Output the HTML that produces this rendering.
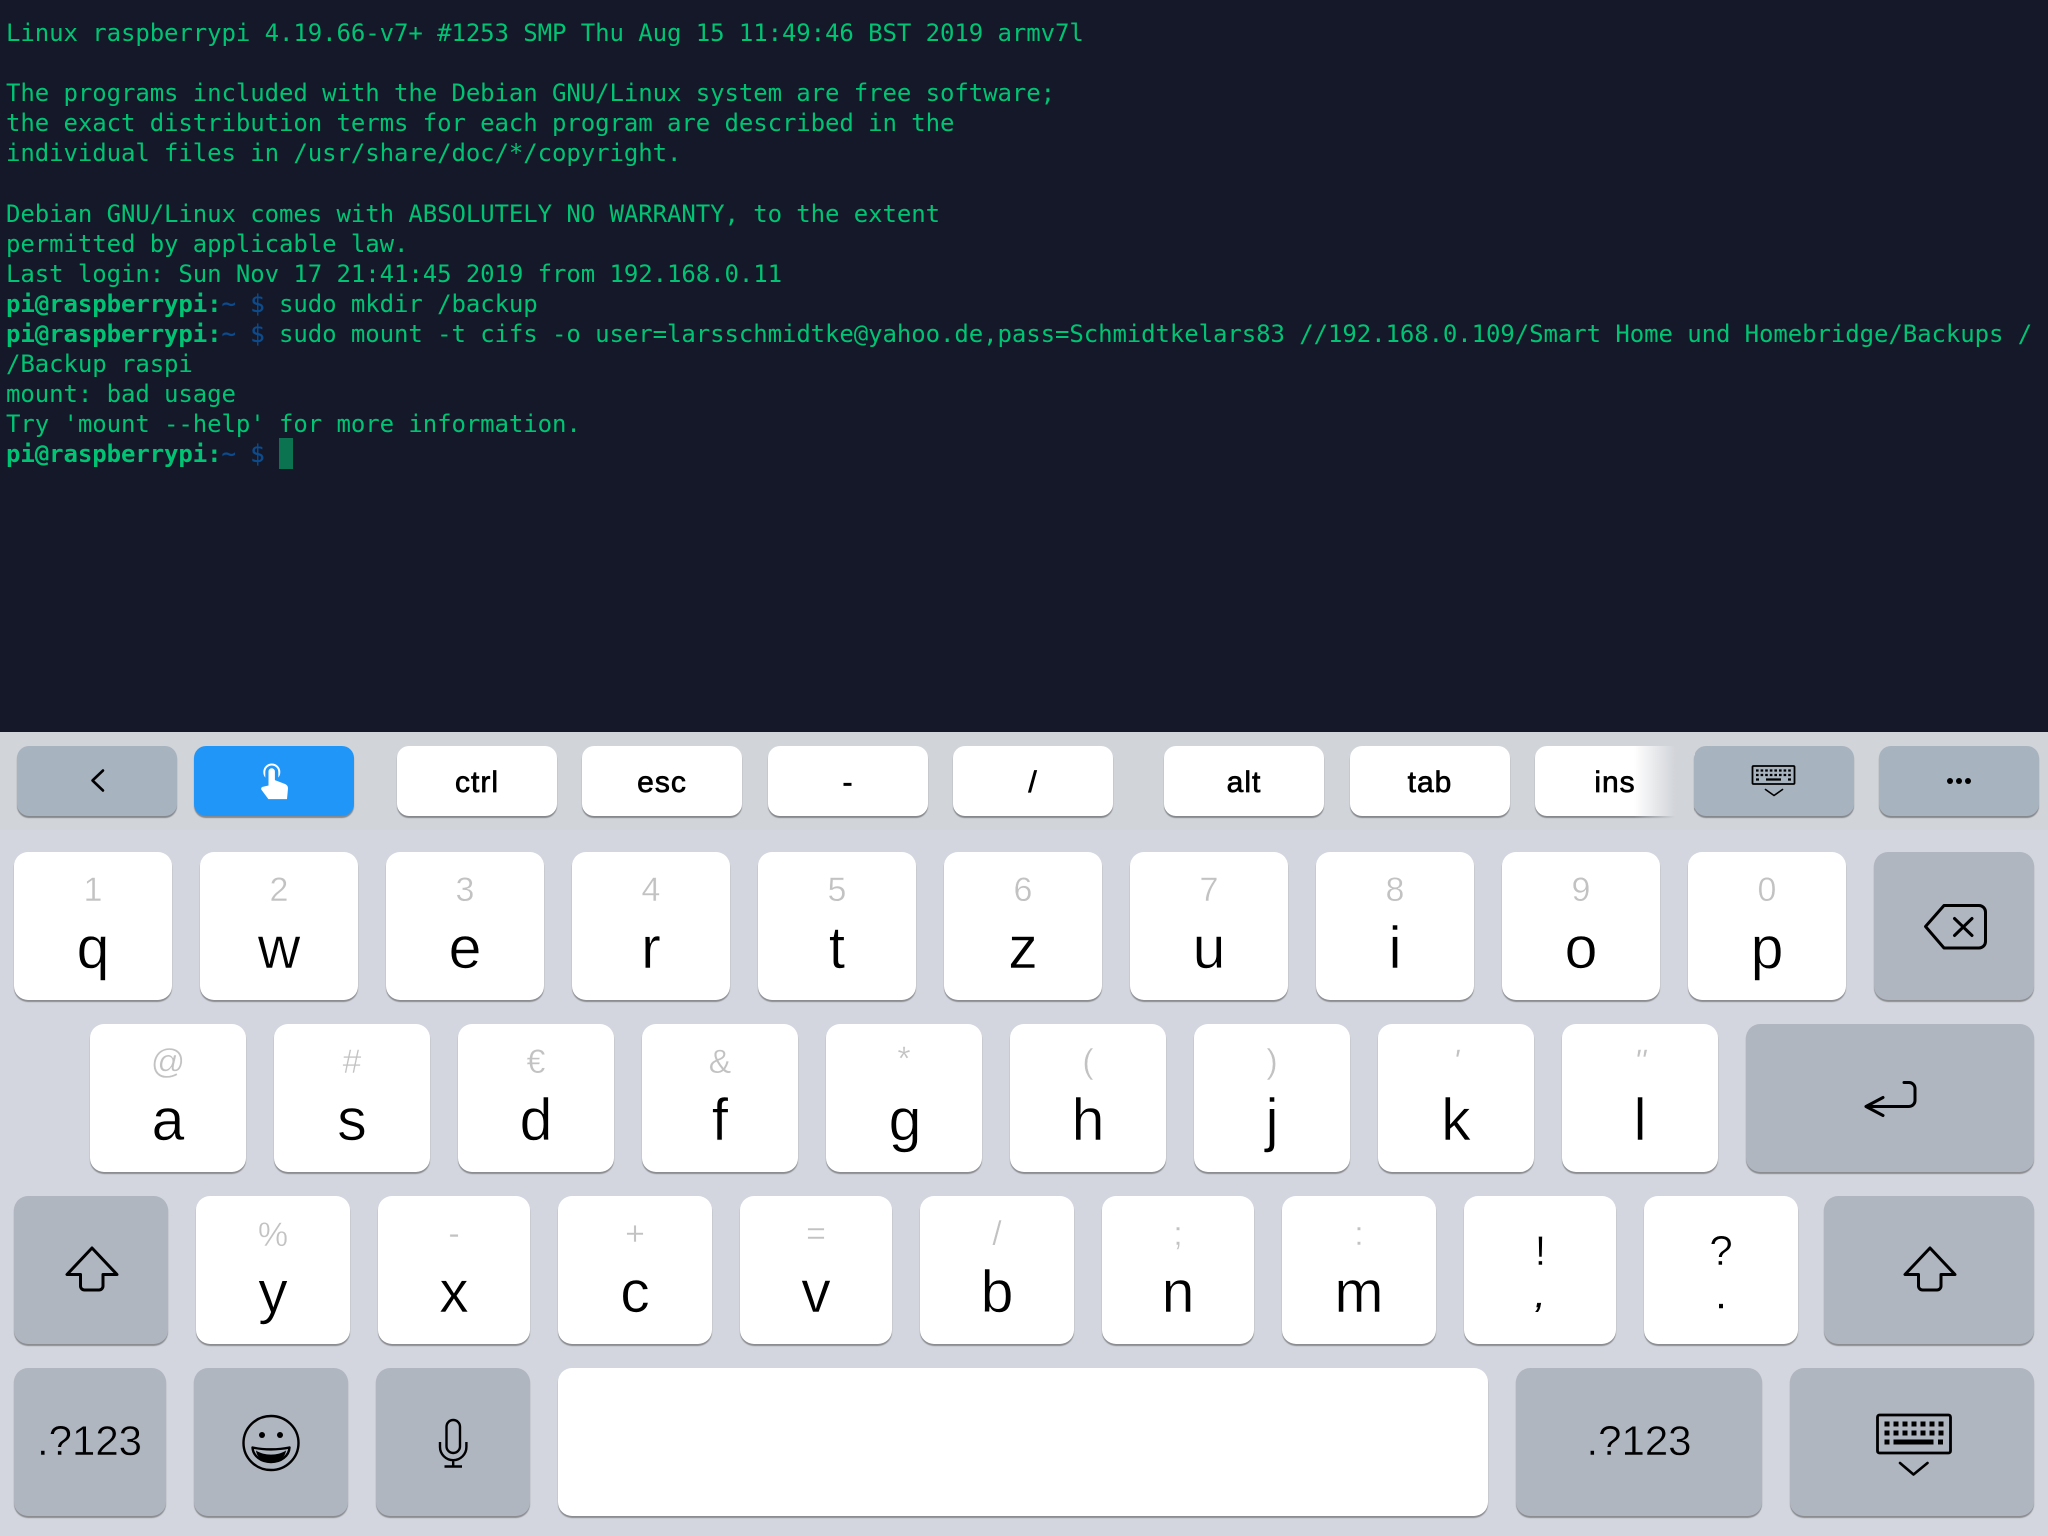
<!DOCTYPE html>
<html lang="en"><head><meta charset="utf-8"><title>Terminal</title>
<style>
html,body{margin:0;padding:0;width:2048px;height:1536px;overflow:hidden;background:#141829}
body{position:relative;font-family:"Liberation Sans",sans-serif}
#term{position:absolute;left:6px;top:18px;margin:0;font:24px/30.1px "DejaVu Sans Mono",monospace;letter-spacing:-.08px;color:#00c473;white-space:pre}
#term b{font-weight:700}#term i{font-style:normal;color:#0b4c8f;-webkit-text-stroke:.3px #0b4c8f}
#cur{position:absolute;left:279px;top:438px;width:14px;height:31px;background:#0b7350}
#bar{position:absolute;left:0;top:732px;width:2048px;height:98px;background:#d1d4d9}
#kb{position:absolute;left:0;top:830px;width:2048px;height:706px;background:#d3d6de}
.b,.k,.f{position:absolute;box-sizing:border-box}
.b{top:746px;width:160px;height:70px;border-radius:12px;background:#fff;box-shadow:0 2px 1px #85888c;text-align:center;font-size:30px;line-height:36px;color:#000;-webkit-text-stroke:.7px #000;letter-spacing:1px}
.b span{position:absolute;left:0;right:0;top:19px}
.g{background:#a7b3bf}
.k,.f{height:148px;border-radius:14px;box-shadow:0 2px 1px #8b8d91;text-align:center}
.k{background:#fff}.f{background:#afb6c0}
.k u,.k s,.f u{position:absolute;left:0;right:0;text-decoration:none}
.k u{top:61px;font-size:59px;line-height:70px;color:#000;-webkit-text-stroke:.6px #fff}
.k s{top:18px;font-size:34px;line-height:40px;color:#c2c2c2;text-decoration:none;-webkit-text-stroke:.4px #fff}
.k em,.f em{position:absolute;left:0;right:0;font-style:normal;font-size:42px;line-height:50px;color:#000}
.k em{-webkit-text-stroke:.5px #fff}
.k em.d{font-size:36px;-webkit-text-stroke:.5px #000}
.f em{-webkit-text-stroke:.5px #afb6c0}
.r1{top:852px}.r2{top:1024px}.r3{top:1196px}.r4{top:1368px}
svg{position:absolute;left:0;top:0}
</style></head><body>
<pre id="term">Linux raspberrypi 4.19.66-v7+ #1253 SMP Thu Aug 15 11:49:46 BST 2019 armv7l

The programs included with the Debian GNU/Linux system are free software;
the exact distribution terms for each program are described in the
individual files in /usr/share/doc/*/copyright.

Debian GNU/Linux comes with ABSOLUTELY NO WARRANTY, to the extent
permitted by applicable law.
Last login: Sun Nov 17 21:41:45 2019 from 192.168.0.11
<b>pi@raspberrypi:</b><i>~ $</i> sudo mkdir /backup
<b>pi@raspberrypi:</b><i>~ $</i> sudo mount -t cifs -o user=larsschmidtke@yahoo.de,pass=Schmidtkelars83 //192.168.0.109/Smart Home und Homebridge/Backups /
/Backup raspi
mount: bad usage
Try 'mount --help' for more information.
<b>pi@raspberrypi:</b><i>~ $</i> </pre>
<div id="cur"></div>
<div id="bar"></div><div id="kb"></div>

<div class="b g" style="left:17px"></div>
<div class="b" style="left:194px;background:#2196f9"></div>
<div class="b" style="left:397px"><span>ctrl</span></div>
<div class="b" style="left:582px"><span>esc</span></div>
<div class="b" style="left:768px"><span>-</span></div>
<div class="b" style="left:953px"><span>/</span></div>
<div class="b" style="left:1164px"><span>alt</span></div>
<div class="b" style="left:1350px"><span>tab</span></div>
<div class="b" style="left:1535px"><span>ins</span></div>
<div style="position:absolute;left:1634px;top:740px;width:60px;height:82px;background:linear-gradient(90deg,rgba(209,212,217,0) 0,#d1d4d9 41px)"></div>
<div class="b g" style="left:1694px"></div>
<div class="b g" style="left:1879px"></div>

<div class="k r1" style="left:14px;width:158px"><s>1</s><u>q</u></div>
<div class="k r1" style="left:200px;width:158px"><s>2</s><u>w</u></div>
<div class="k r1" style="left:386px;width:158px"><s>3</s><u>e</u></div>
<div class="k r1" style="left:572px;width:158px"><s>4</s><u>r</u></div>
<div class="k r1" style="left:758px;width:158px"><s>5</s><u>t</u></div>
<div class="k r1" style="left:944px;width:158px"><s>6</s><u>z</u></div>
<div class="k r1" style="left:1130px;width:158px"><s>7</s><u>u</u></div>
<div class="k r1" style="left:1316px;width:158px"><s>8</s><u>i</u></div>
<div class="k r1" style="left:1502px;width:158px"><s>9</s><u>o</u></div>
<div class="k r1" style="left:1688px;width:158px"><s>0</s><u>p</u></div>
<div class="f r1" style="left:1874px;width:160px"></div>

<div class="k r2" style="left:90px;width:156px"><s>@</s><u>a</u></div>
<div class="k r2" style="left:274px;width:156px"><s>#</s><u>s</u></div>
<div class="k r2" style="left:458px;width:156px"><s>€</s><u>d</u></div>
<div class="k r2" style="left:642px;width:156px"><s>&amp;</s><u>f</u></div>
<div class="k r2" style="left:826px;width:156px"><s style="top:15px">*</s><u style="left:2px">g</u></div>
<div class="k r2" style="left:1010px;width:156px"><s>(</s><u>h</u></div>
<div class="k r2" style="left:1194px;width:156px"><s>)</s><u>j</u></div>
<div class="k r2" style="left:1378px;width:156px"><s style="font-style:italic">'</s><u>k</u></div>
<div class="k r2" style="left:1562px;width:156px"><s style="font-style:italic">"</s><u>l</u></div>
<div class="f r2" style="left:1746px;width:288px"></div>

<div class="f r3" style="left:14px;width:154px"></div>
<div class="k r3" style="left:196px;width:154px"><s style="top:19px">%</s><u>y</u></div>
<div class="k r3" style="left:378px;width:152px"><s>-</s><u>x</u></div>
<div class="k r3" style="left:558px;width:154px"><s>+</s><u>c</u></div>
<div class="k r3" style="left:740px;width:152px"><s>=</s><u>v</u></div>
<div class="k r3" style="left:920px;width:154px"><s>/</s><u>b</u></div>
<div class="k r3" style="left:1102px;width:152px"><s>;</s><u>n</u></div>
<div class="k r3" style="left:1282px;width:154px"><s>:</s><u>m</u></div>
<div class="k r3" style="left:1464px;width:152px"><em style="top:30px;left:1px">!</em><em class="d" style="top:74px;font-style:italic">,</em></div>
<div class="k r3" style="left:1644px;width:154px"><em style="top:30px">?</em><em class="d" style="top:75px">.</em></div>
<div class="f r3" style="left:1824px;width:210px"></div>

<div class="f r4" style="left:14px;width:152px"><em style="top:48px;left:-1px">.?123</em></div>
<div class="f r4" style="left:194px;width:154px"></div>
<div class="f r4" style="left:376px;width:154px"></div>
<div class="k r4" style="left:558px;width:930px"></div>
<div class="f r4" style="left:1516px;width:246px"><em style="top:48px">.?123</em></div>
<div class="f r4" style="left:1790px;width:244px"></div>

<svg width="2048" height="1536" viewBox="0 0 2048 1536" fill="none" stroke="#000" stroke-linejoin="round" stroke-linecap="round">
<!-- back -->
<path d="M103 770.5L92.5 780.5L103 790.5" stroke-width="2.6"/>
<!-- touch hand -->
<g stroke="none" fill="#fff">
<path fill-rule="evenodd" d="M271.8 763.5a8.5 8.5 0 0 1 8.5 8.5c0 2.4-.8 4-2 5.6v-5.6a6.5 6.5 0 0 0-13 0v5.6c-1.2-1.6-2-3.2-2-5.6a8.5 8.5 0 0 1 8.5-8.5z"/>
<path d="M268.5 771.5a3.2 3.2 0 0 1 6.4 0v8.6l9.5 3.6c2.6 1 3.6 2.4 3.6 4.8l-1 10.6h-18.6l-7-9.4c-.6-1.4.2-2.8 1.6-3l5.5-1.2z"/>
</g>
<!-- mini keyboard -->
<rect x="1752.5" y="766" width="42" height="18" rx="1" stroke-width="1.8" stroke-linejoin="miter"/>
<g stroke-width="2.2" stroke-linecap="butt">
<path d="M1756 770.5H1791M1756 775H1791" stroke-dasharray="2.6 2"/>
<path d="M1756 779.5H1759M1766 779.5H1781M1788 779.5H1791"/>
</g>
<path d="M1765.5 789.5L1774 795.5L1782.5 789.5" stroke-width="1.6"/>
<!-- dots -->
<g fill="#000" stroke="none"><circle cx="1950" cy="781" r="3"/><circle cx="1959" cy="781" r="3"/><circle cx="1968" cy="781" r="3"/></g>
<!-- delete -->
<path d="M1925.5 926.5L1944 905.5H1979a6.5 6.5 0 0 1 6.5 6.5V941.5a6.5 6.5 0 0 1-6.5 6.5H1944z" stroke-width="3"/>
<path d="M1954.5 918.5L1972 935.5M1972 918.5L1954.5 935.5" stroke-width="3"/>
<!-- return -->
<path d="M1883 1097.5L1866 1106.5L1883 1115.5M1866 1106.5H1909a6 6 0 0 0 6-6V1088.5a6 6 0 0 0-6-6H1904" stroke-width="3"/>
<!-- shifts -->
<path d="M92 1248L67 1274.5H80.5V1286a4 4 0 0 0 4 4H99a4 4 0 0 0 4-4V1274.5H117z" stroke-width="3"/>
<path d="M1930 1248L1905 1274.5H1918.5V1286a4 4 0 0 0 4 4H1937a4 4 0 0 0 4-4V1274.5H1955z" stroke-width="3"/>
<!-- emoji -->
<ellipse cx="271" cy="1443" rx="27.5" ry="27" stroke-width="2.4"/>
<circle cx="262" cy="1435" r="3" fill="#000" stroke="none"/><circle cx="280" cy="1435" r="3" fill="#000" stroke="none"/>
<path d="M252.5 1447.5C264 1450 278 1450 289.5 1447.5C289 1456 281 1462 271 1462C261 1462 253 1456 252.5 1447.5Z" stroke-width="2.4"/>
<path d="M256 1450.5C264 1456 278 1456 286 1450.5C285 1458 279 1462 271 1462C263 1462 257 1458 256 1450.5Z" fill="#000" stroke="none"/>
<!-- mic -->
<rect x="446.5" y="1420" width="13.5" height="33" rx="6.75" stroke-width="2.4"/>
<path d="M440 1442V1447a13.2 13.2 0 0 0 26.4 0V1442M453.2 1460V1466" stroke-width="2.4" stroke-linecap="butt"/>
<path d="M444.5 1466.5H462" stroke-width="2.6" stroke-linecap="butt"/>
<!-- big keyboard -->
<rect x="1877.5" y="1415" width="73" height="38" rx="2" stroke-width="2.8"/>
<g stroke-width="5" stroke-linecap="butt">
<path d="M1884.5 1424H1944M1884.5 1433H1944" stroke-dasharray="5 4"/>
<path d="M1884.5 1442H1889.5M1893.5 1442H1933.5M1938 1442H1943"/>
</g>
<path d="M1900 1463L1913.5 1474.5L1927.5 1463" stroke-width="2.6"/>
</svg>
</body></html>
